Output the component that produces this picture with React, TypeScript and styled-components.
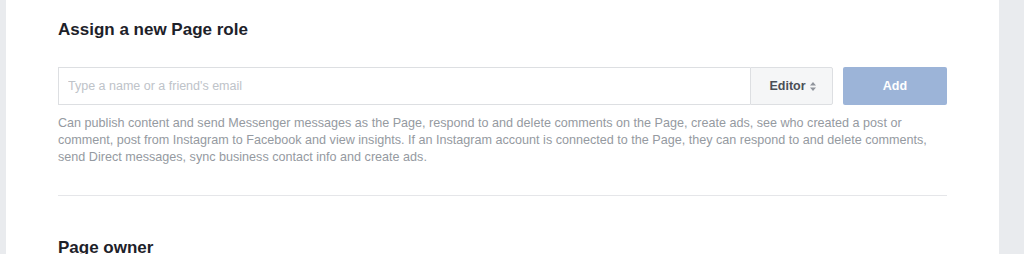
import React from 'react';
import styled, { createGlobalStyle } from 'styled-components';

const GlobalStyle = createGlobalStyle`
  html, body {
    margin: 0;
    padding: 0;
    background: #e9ebee;
    font-family: "Liberation Sans", Arial, Helvetica, sans-serif;
  }
`;

const StyledPage = styled.div`
  display: flex;
  height: 254px;
  overflow: hidden;
  background: #e9ebee;
`;

const StyledGutter = styled.div<{ width: number }>`
  flex: 0 0 ${(props) => props.width}px;
`;

const StyledPanel = styled.div`
  flex: 0 0 993px;
  background: #fff;
  padding: 20px 52px 0 52px;
  box-sizing: border-box;
`;

const StyledHeading = styled.h2`
  margin: 0;
  font-size: 17px;
  line-height: 20px;
  font-weight: 700;
  color: #1d2129;
`;

const StyledRow = styled.div`
  display: flex;
  margin-top: 27px;
  height: 38px;
`;

const StyledInput = styled.input`
  flex: 1;
  min-width: 0;
  height: 38px;
  box-sizing: border-box;
  border: 1px solid #dddfe2;
  border-right: none;
  padding: 0 9px;
  font-family: inherit;
  font-size: 12.5px;
  color: #1d2129;
  outline: none;
  &::placeholder {
    color: #bec3c9;
  }
`;

const StyledSelect = styled.button`
  flex: 0 0 83px;
  display: flex;
  align-items: center;
  justify-content: center;
  gap: 4px;
  border: 1px solid #dddfe2;
  border-radius: 0 2px 2px 0;
  background: #f5f6f7;
  font-family: inherit;
  font-size: 12.5px;
  font-weight: 700;
  color: #4b4f56;
  padding: 0 0 0 2px;
`;

const StyledAddButton = styled.button`
  flex: 0 0 104px;
  margin-left: 10px;
  border: none;
  border-radius: 2px;
  background: #9cb4d8;
  color: #fff;
  font-family: inherit;
  font-size: 12.5px;
  font-weight: 700;
`;

const StyledDescription = styled.p`
  margin: 10px 0 0 0;
  font-size: 12.6px;
  line-height: 17px;
  color: #959aa1;
`;

const StyledDivider = styled.hr`
  margin: 29px 0 0 0;
  border: none;
  border-top: 1px solid #e5e6e9;
`;

const StyledSubHeading = styled(StyledHeading)`
  margin-top: 42px;
`;

const SortIcon = () => (
  <svg width="6" height="9" viewBox="0 0 6 9">
    <path d="M3 0 L6 3.5 H0 Z M3 9 L0 5.5 H6 Z" fill="#90949c" />
  </svg>
);

const App = () => {
  return (
    <>
      <GlobalStyle />
      <StyledPage>
        <StyledGutter width={6} />
        <StyledPanel>
          <StyledHeading>Assign a new Page role</StyledHeading>
          <StyledRow>
            <StyledInput placeholder="Type a name or a friend's email" />
            <StyledSelect>
              Editor
              <SortIcon />
            </StyledSelect>
            <StyledAddButton>Add</StyledAddButton>
          </StyledRow>
          <StyledDescription>
            Can publish content and send Messenger messages as the Page, respond
            to and delete comments on the Page, create ads, see who created a
            post or comment, post from Instagram to Facebook and view insights.
            If an Instagram account is connected to the Page, they can respond
            to and delete comments, send Direct messages, sync business contact
            info and create ads.
          </StyledDescription>
          <StyledDivider />
          <StyledSubHeading>Page owner</StyledSubHeading>
        </StyledPanel>
        <StyledGutter width={25} />
      </StyledPage>
    </>
  );
};

export default App;
